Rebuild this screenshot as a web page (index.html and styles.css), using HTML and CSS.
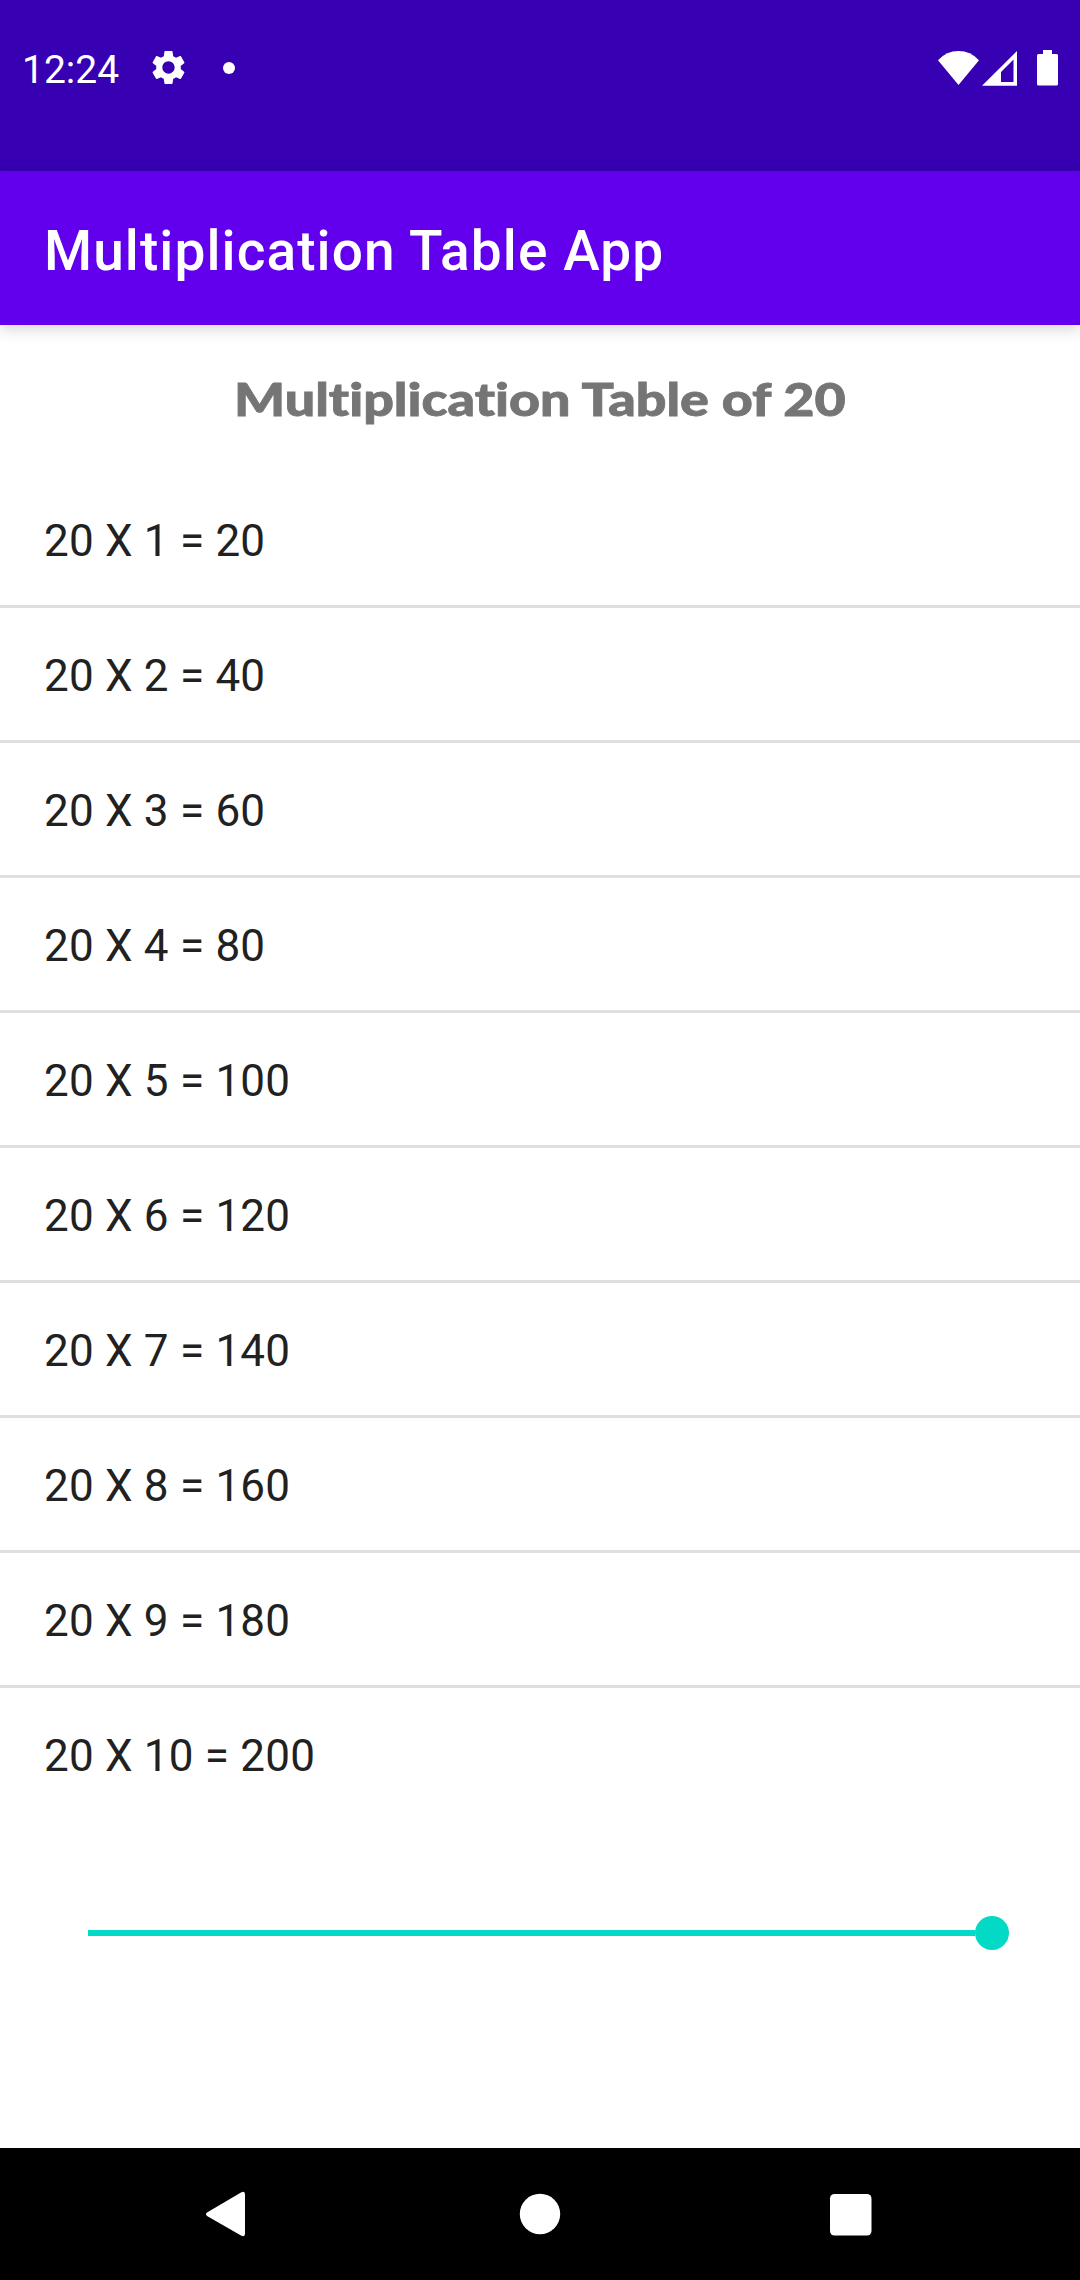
FILE: index.html
```html
<!DOCTYPE html>
<html lang="en">
<head>
<meta charset="utf-8">
<title>Multiplication Table App</title>
<link rel="stylesheet" href="styles.css">
</head>
<body>
<div class="screen">
  <header class="status">
    <span class="clock">12:24</span>
    <svg class="gear" viewBox="0 0 24 24"><path d="M19.14 12.94c.04-.3.06-.61.06-.94 0-.32-.02-.64-.07-.94l2.03-1.58c.18-.14.23-.41.12-.61l-1.92-3.32c-.12-.22-.37-.29-.59-.22l-2.39.96c-.5-.38-1.03-.7-1.62-.94l-.36-2.54c-.04-.24-.24-.41-.48-.41h-3.84c-.24 0-.43.17-.47.41l-.36 2.54c-.59.24-1.13.57-1.62.94l-2.39-.96c-.22-.08-.47 0-.59.22L2.74 8.87c-.12.21-.08.47.12.61l2.03 1.58c-.05.3-.09.63-.09.94s.02.64.07.94l-2.03 1.58c-.18.14-.23.41-.12.61l1.92 3.32c.12.22.37.29.59.22l2.39-.96c.5.38 1.03.7 1.62.94l.36 2.54c.05.24.24.41.48.41h3.84c.24 0 .44-.17.47-.41l.36-2.54c.59-.24 1.13-.56 1.62-.94l2.39.96c.22.08.47 0 .59-.22l1.92-3.32c.12-.22.07-.47-.12-.61l-2.01-1.58zM12 15.6c-1.98 0-3.6-1.62-3.6-3.6s1.62-3.6 3.6-3.6 3.6 1.62 3.6 3.6-1.62 3.6-3.6 3.6z"/></svg>
    <span class="dot"></span>
    <svg class="signals" viewBox="0 0 124 40">
      <path d="M2 12.2Q10.500 3 22.500 3T43 12.200L22.500 37Z"/>
      <path fill-rule="evenodd" d="M46 37.700 81 3V37.700ZM65 24V34H77.500V11.500Z"/>
      <path d="M107 2h9v4h4.500q1.500 0 1.500 1.500v28.500q0 1.500-1.500 1.500h-18q-1.500 0-1.500-1.500V7.500q0-1.500 1.500-1.500H107Z"/>
    </svg>
  </header>
  <div class="appbar"><h1 class="app-title">Multiplication Table App</h1></div>
  <main class="content">
    <h2 class="heading">Multiplication Table of 20</h2>
    <ul class="table">
      <li>20 X 1 = 20</li>
      <li>20 X 2 = 40</li>
      <li>20 X 3 = 60</li>
      <li>20 X 4 = 80</li>
      <li>20 X 5 = 100</li>
      <li>20 X 6 = 120</li>
      <li>20 X 7 = 140</li>
      <li>20 X 8 = 160</li>
      <li>20 X 9 = 180</li>
      <li>20 X 10 = 200</li>
    </ul>
    <div class="slider"><span class="track"></span><span class="thumb"></span></div>
  </main>
  <nav class="navbar">
    <svg class="nav-icon" viewBox="0 0 48 48"><path d="M2 22.500 36 2.500Q40 0.500 40 4.500V43.500Q40 47.500 36 45.500L2 26Q0 24.200 2 22.500Z"/></svg>
    <svg class="nav-icon" viewBox="0 0 48 48"><circle cx="24" cy="24" r="20.200"/></svg>
    <svg class="nav-icon" viewBox="0 0 48 48"><rect x="3" y="4" width="41.500" height="41.500" rx="4.500"/></svg>
  </nav>
</div>
</body>
</html>
```
FILE: styles.css
```css
* { box-sizing: border-box; }
body {
  margin: 0;
  font-family: Roboto, sans-serif;
  background: #fff;
}
.screen {
  display: flex;
  flex-direction: column;
  width: 1080px;
  height: 2280px;
}
.status {
  display: flex;
  align-items: center;
  height: 171px;
  padding: 0 20px 36px 22px;
  background: #3700b3;
  color: #fff;
}
.status svg, .nav-icon { fill: #fff; }
.clock {
  width: 126px;
  font-size: 39px;
  line-height: 46px;
  padding-top: 5px;
}
.gear { width: 41px; height: 41px; }
.dot {
  width: 12px;
  height: 12px;
  margin-left: 34px;
  border-radius: 50%;
  background: #fff;
}
.signals {
  width: 124px;
  height: 40px;
  margin-left: auto;
}
.appbar {
  display: flex;
  align-items: center;
  height: 154px;
  padding: 5px 44px 0;
  background: #6200ee;
  color: #fff;
  box-shadow: 0 4px 14px rgba(0, 0, 0, .17);
}
.app-title {
  margin: 0;
  font-size: 55px;
  font-weight: 500;
  line-height: 64px;
  letter-spacing: 1.08px;
  white-space: nowrap;
}
.content {
  flex: 1;
  display: flex;
  flex-direction: column;
}
.heading {
  align-self: center;
  height: 148px;
  margin: 0;
  padding-top: 44px;
  color: #757575;
  font: 900 45px/60px Lato, sans-serif;
  font-variant-ligatures: none;
  white-space: nowrap;
  transform: scaleX(1.195);
  -webkit-text-stroke: .8px #757575;
}
.table {
  margin: 0;
  padding: 0;
  list-style: none;
}
.table li {
  height: 135px;
  padding: 2px 44px 0;
  border-bottom: 3px solid #dfdfdf;
  color: #212121;
  font-size: 44px;
  line-height: 132px;
  letter-spacing: .2px;
}
.table li:last-child { border-bottom: 0; }
.slider {
  display: flex;
  align-items: center;
  height: 34px;
  margin: 93px 71px 0 88px;
}
.track {
  flex: 1;
  height: 6px;
  background: #03dac5;
}
.thumb {
  width: 34px;
  height: 34px;
  border-radius: 50%;
  background: #03dac5;
}
.navbar {
  display: flex;
  align-items: center;
  justify-content: center;
  gap: 263px;
  height: 132px;
  background: #000;
}
.nav-icon { width: 48px; height: 48px; }
```
